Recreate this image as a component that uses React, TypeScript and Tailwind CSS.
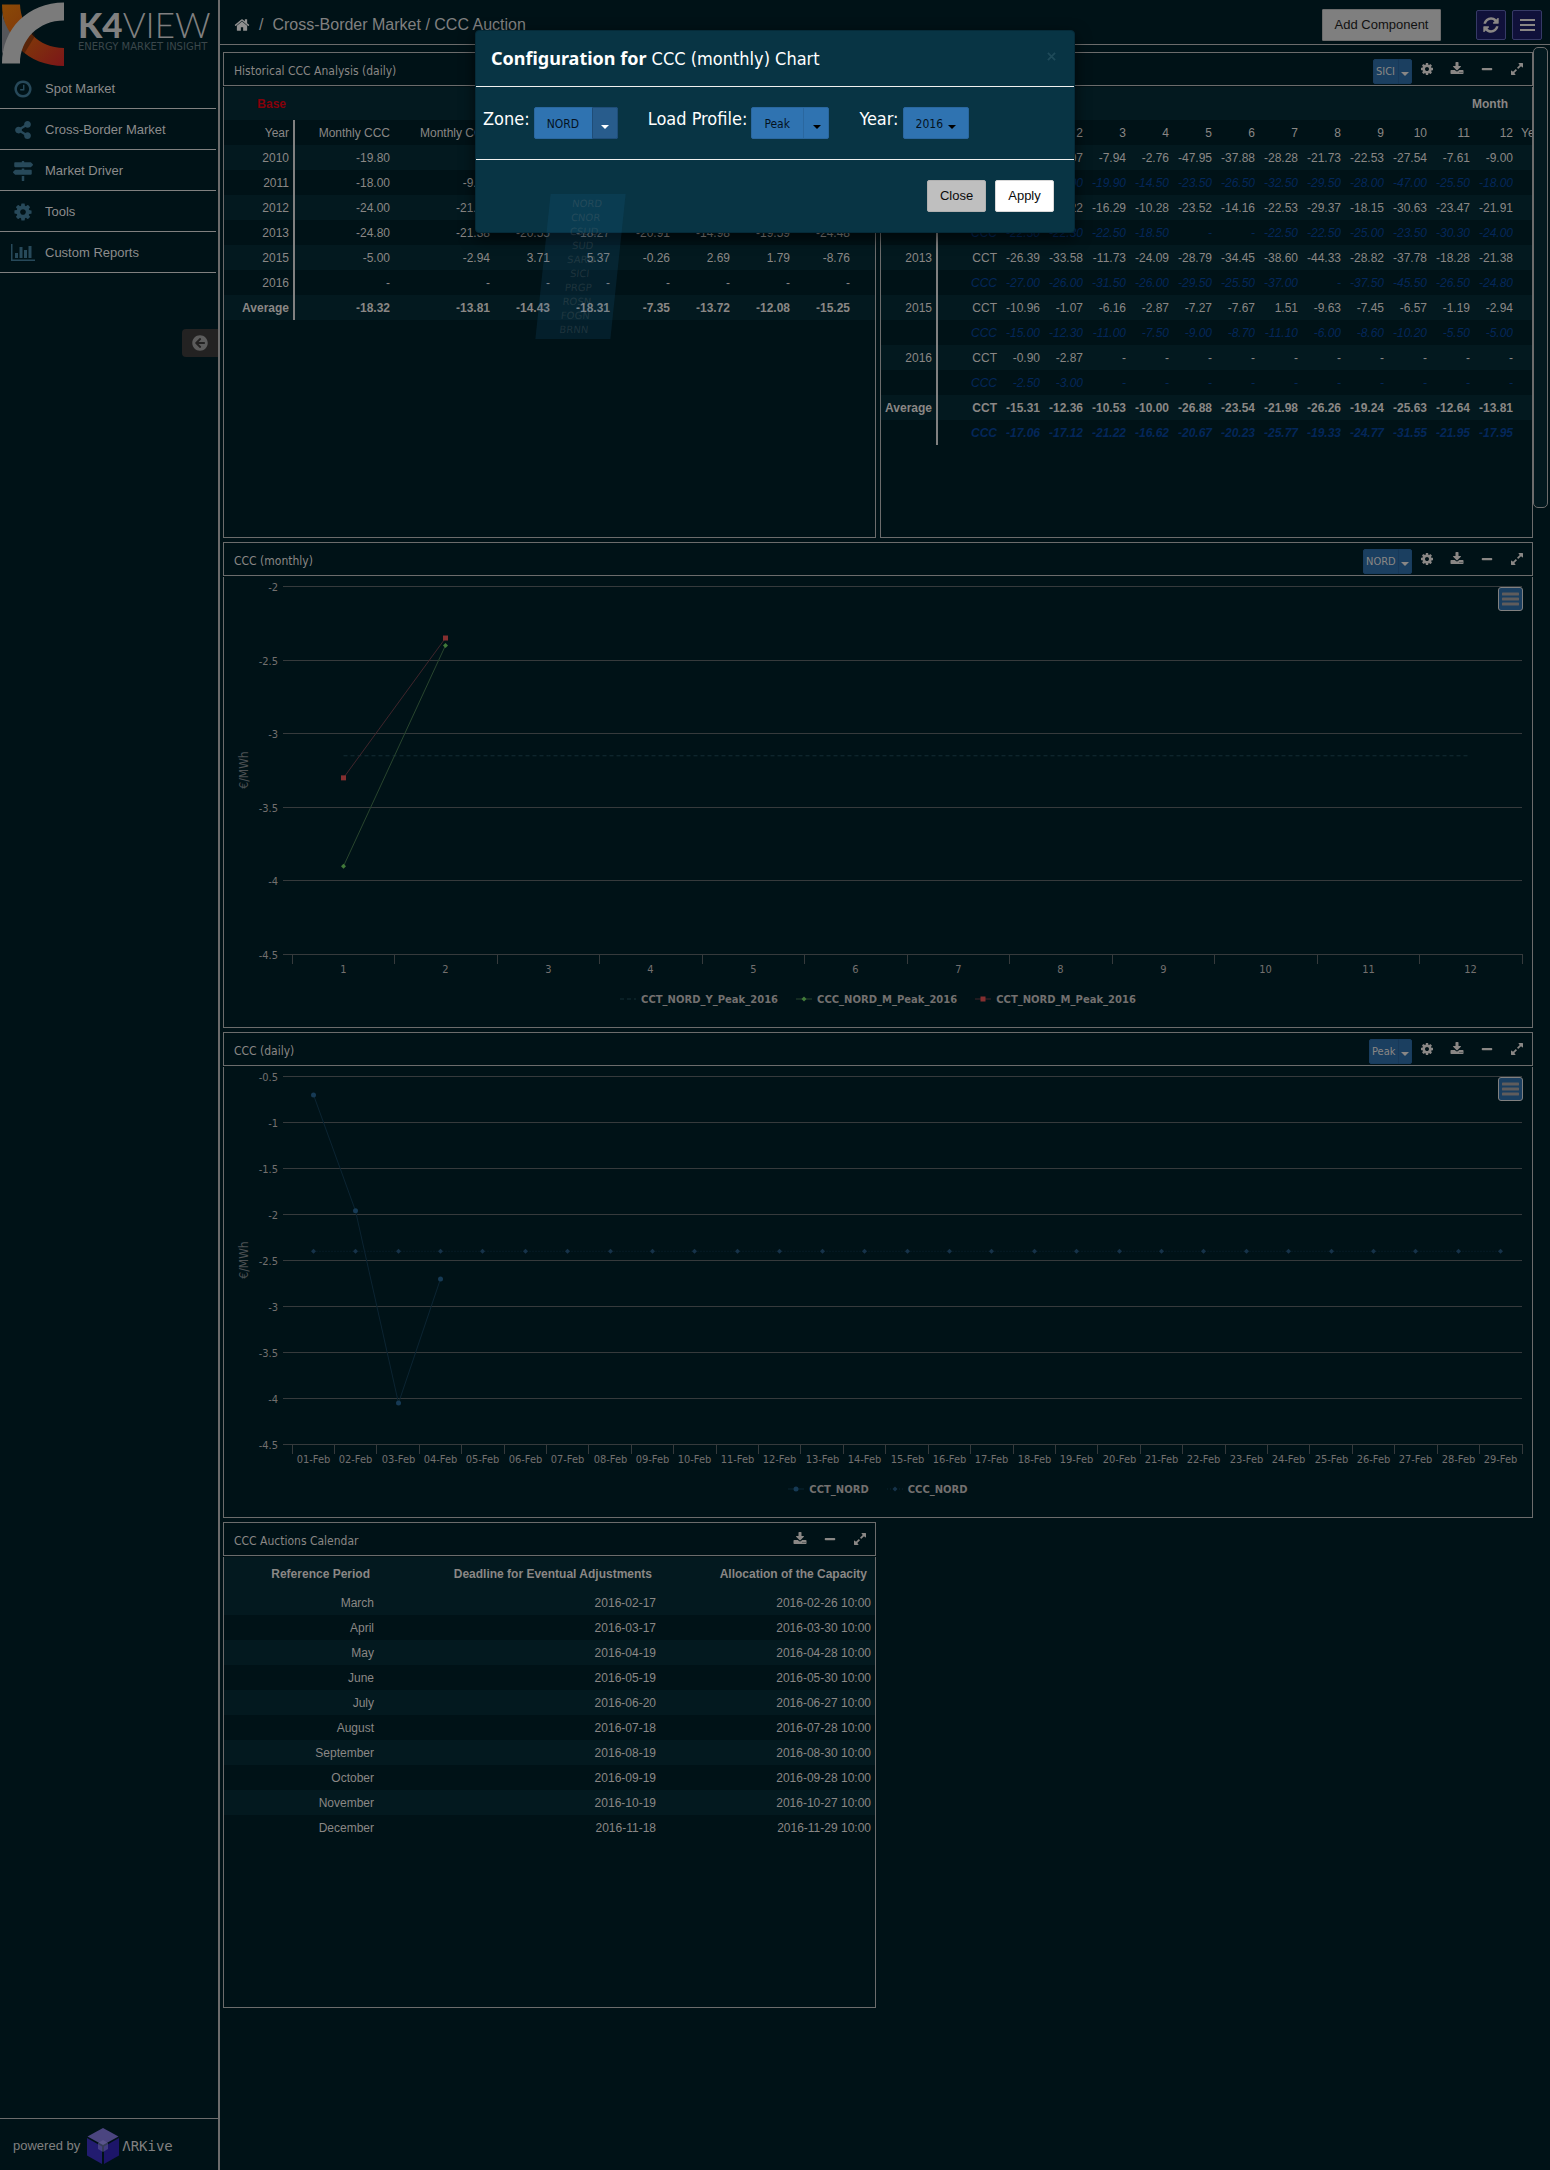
import { useEffect, useRef, useState, type ReactNode } from "react";
import { FaArrowCircleLeft, FaMapSigns, FaMinus, FaShareAlt } from "react-icons/fa";

/* ---------- icons (1792 unit grid) ---------- */

const ICONS = {
  cog: "M1152 896q0-106-75-181t-181-75-181 75-75 181 75 181 181 75 181-75 75-181zm512-109v222q0 12-8 23t-20 13l-185 28q-19 54-39 91 35 50 107 138 10 12 10 25t-9 23q-27 37-99 108t-94 71q-12 0-26-9l-138-108q-44 23-91 38-16 136-29 186-7 28-36 28h-222q-14 0-24.5-8.5t-11.5-21.5l-28-184q-49-16-90-37l-141 107q-10 9-25 9-14 0-25-11-126-114-165-168-7-10-7-23 0-12 8-23 15-21 51-66.5t54-70.5q-27-50-41-99l-183-27q-13-2-21-12.5t-8-23.5v-222q0-12 8-23t19-13l186-28q14-46 39-92-40-57-107-138-10-12-10-24 0-10 9-23 26-36 98.5-107.5t94.5-71.5q13 0 26 10l138 107q44-23 91-38 16-136 29-186 7-28 36-28h222q14 0 24.5 8.5t11.5 21.5l28 184q49 16 90 37l142-107q9-9 24-9 13 0 25 10 129 119 165 170 7 8 7 22 0 12-8 23-15 21-51 66.5t-54 70.5q26 50 41 98l183 28q13 2 21 12.5t8 23.5z",
  download:
    "M1344 1344q0-26-19-45t-45-19-45 19-19 45 19 45 45 19 45-19 19-45zm256 0q0-26-19-45t-45-19-45 19-19 45 19 45 45 19 45-19 19-45zm128-224v320q0 40-28 68t-68 28h-1472q-40 0-68-28t-28-68v-320q0-40 28-68t68-28h465l135 136q58 56 136 56t136-56l136-136h464q40 0 68 28t28 68zm-325-569q17 41-14 70l-448 448q-18 19-45 19t-45-19l-448-448q-31-29-14-70 17-39 59-39h256v-448q0-26 19-45t45-19h256q26 0 45 19t19 45v448h256q42 0 59 39z",
  expand:
    "M883 1056q0 13-10 23l-332 332 144 144q19 19 19 45t-19 45-45 19h-448q-26 0-45-19t-19-45v-448q0-26 19-45t45-19 45 19l144 144 332-332q10-10 23-10t23 10l114 114q10 10 10 23zm781-864v448q0 26-19 45t-45 19-45-19l-144-144-332 332q-10 10-23 10t-23-10l-114-114q-10-10-10-23t10-23l332-332-144-144q-19-19-19-45t19-45 45-19h448q26 0 45 19t19 45z",
  refresh:
    "M1639 1056q0 5-1 7-64 268-268 434.5t-478 166.5q-146 0-282.5-55t-243.5-157l-129 129q-19 19-45 19t-45-19-19-45v-448q0-26 19-45t45-19h448q26 0 45 19t19 45-19 45l-137 137q71 66 161 102t187 36q134 0 250-65t186-179q11-17 53-117 8-23 30-23h192q13 0 22.5 9.5t9.5 22.5zm25-800v448q0 26-19 45t-45 19h-448q-26 0-45-19t-19-45 19-45l138-138q-148-137-349-137-134 0-250 65t-186 179q-11 17-53 117-8 23-30 23h-199q-13 0-22.5-9.5t-9.5-22.5v-7q65-268 270-434.5t480-166.5q146 0 284 55.5t245 156.5l130-129q19-19 45-19t45 19 19 45z",
  home: "M1472 992v480q0 26-19 45t-45 19h-384v-384h-256v384h-384q-26 0-45-19t-19-45v-480q0-1 .5-3t.5-3l575-474 575 474q1 2 1 6zm223-69l-62 74q-8 9-21 11h-3q-13 0-21-7l-692-577-692 577q-12 8-24 7-13-2-21-11l-62-74q-8-10-7-23.5t11-21.5l719-599q32-26 76-26t76 26l244 204v-195q0-14 9-23t23-9h192q14 0 23 9t9 23v408l219 182q10 8 11 21.5t-7 23.5z",
  clock:
    "M1024 544v448q0 14-9 23t-23 9h-320q-14 0-23-9t-9-23v-64q0-14 9-23t23-9h224v-352q0-14 9-23t23-9h64q14 0 23 9t9 23zm416 352q0-148-73-273t-198-198-273-73-273 73-198 198-73 273 73 273 198 198 273 73 273-73 198-198 73-273zm224 0q0 209-103 385.5t-279.5 279.5-385.5 103-385.5-103-279.5-279.5-103-385.5 103-385.5 279.5-279.5 385.5-103 385.5 103 279.5 279.5 103 385.5z",
};

function Icon({ name, className }: { name: keyof typeof ICONS; className: string }) {
  return (
    <svg viewBox="0 0 1792 1792" className={className} fill="currentColor" aria-hidden="true">
      <path d={ICONS[name]} />
    </svg>
  );
}

function Caret({ className }: { className: string }) {
  return (
    <svg viewBox="0 0 8 4" className={"h-1 w-2 " + className} fill="currentColor" aria-hidden="true">
      <path d="M0 0h8L4 4z" />
    </svg>
  );
}

function BarsIcon() {
  return (
    <svg viewBox="0 0 22 16" className="h-4 w-[22px]" aria-hidden="true">
      <g fill="none" stroke="currentColor" strokeWidth="2">
        <path d="M4 3h15M4 8h15M4 13h15" />
      </g>
    </svg>
  );
}

function BarChartIcon() {
  return (
    <svg viewBox="0 0 24 18" className="h-[18px] w-6" fill="currentColor" aria-hidden="true">
      <path d="M0 0h1.500v15.500H24V17H0zM4 9h3v5H4zM8.500 3h3v11h-3zM13 6h3v8h-3zM17.500 2h3v12h-3z" />
    </svg>
  );
}

/* ---------- brand marks ---------- */

function K4Logo() {
  return (
    <div className="flex h-[68px] items-start">
      <svg viewBox="0 0 66 68" className="h-[68px] w-[66px] shrink-0" aria-hidden="true">
        <defs>
          <linearGradient id="swoosh" x1="0" y1="0" x2="1" y2="1">
            <stop offset="0" stopColor="#8a4a06" />
            <stop offset="0.55" stopColor="#7f330c" />
            <stop offset="1" stopColor="#7c1519" />
          </linearGradient>
        </defs>
        <path d="M2 4.500h18C21 28 38 48 64 48v18C28 66 2 40 2 4.500z" fill="url(#swoosh)" />
        <path d="M2 12Q4 24 11 34L2 54z" fill="#55565a" />
        <path d="M17 44 33 30 35 36 24 54z" fill="#2a1206" opacity="0.45" />
        <path d="M2 63.500C2 29 28 2.500 64 2.500v18C39 20.500 20 39 20 63.500z" fill="#7b7b7b" />
      </svg>
      <div className="ml-[12px] flex flex-col pt-[7px]">
        <div className="font-[Lato] text-[35px] leading-[34px] text-[#808080]">
          <span className="font-black">K4</span>
          <span className="font-light">VIEW</span>
        </div>
        <div className="font-['DejaVu_Sans'] text-[10px] leading-3 whitespace-nowrap text-[#3b474b]">
          ENERGY MARKET INSIGHT
        </div>
      </div>
    </div>
  );
}

function ArkiveLogo() {
  return (
    <span className="flex items-center">
      <svg viewBox="0 0 34 38" className="h-[38px] w-[34px]" aria-hidden="true">
        <path d="M17 1 32.500 9.500 17 18 1.500 9.500z" fill="#4b4580" />
        <path d="M1 11 16 19.500V37L1 28.500z" fill="#221c70" />
        <path d="M33 11 18 19.500V37l15-8.500z" fill="#1c1568" />
        <path d="M12 16l5-3 5 3v6l-5 3-5-3z" fill="#6a659a" opacity="0.5" />
      </svg>
      <span className="ml-[2px] font-['DejaVu_Sans_Mono'] text-[14px] leading-5 text-[#808080]">ΛRKive</span>
    </span>
  );
}

/* ---------- sidebar ---------- */

const NAV: { label: string; icon: ReactNode }[] = [
  { label: "Spot Market", icon: <Icon name="clock" className="size-5" /> },
  { label: "Cross-Border Market", icon: <FaShareAlt className="size-[18px]" /> },
  { label: "Market Driver", icon: <FaMapSigns className="size-5" /> },
  { label: "Tools", icon: <Icon name="cog" className="size-5" /> },
  { label: "Custom Reports", icon: <BarChartIcon /> },
];

function Sidebar() {
  return (
    <aside className="flex w-[220px] shrink-0 flex-col border-r-2 border-[#6c6c6c]">
      <K4Logo />
      <nav className="mr-[2px]">
        {NAV.map((n) => (
          <a
            key={n.label}
            href="#"
            className="flex h-[41px] items-center border-b border-[#808080] pt-px text-[13px] text-[#8c8c8c]"
          >
            <span className="flex w-[45px] justify-center text-[#27495a]">{n.icon}</span>
            {n.label}
          </a>
        ))}
      </nav>
      <button
        type="button"
        aria-label="Collapse menu"
        className="mt-14 flex h-7 w-9 items-center justify-center self-end rounded-l-[4px] bg-[#232222] text-[#5c5c5c]"
      >
        <FaArrowCircleLeft className="size-4" />
      </button>
      <div className="mt-auto flex h-[52px] items-center border-t border-[#6c6c6c] pt-[2px] pl-[13px] text-[13px] text-[#808080]">
        <span className="mr-[6px]">powered by</span>
        <ArkiveLogo />
      </div>
    </aside>
  );
}

/* ---------- widgets ---------- */

const TOOL = "flex h-6 w-[30px] items-center justify-center";

function Widget({
  title,
  select,
  settings = true,
  wide,
  children,
}: {
  title: string;
  select?: { value: string; label: string };
  settings?: boolean;
  wide?: boolean;
  children: ReactNode;
}) {
  return (
    <section className={wide ? "col-span-2 min-w-0" : "min-w-0"}>
      <header className="mb-px flex h-[34px] items-center border border-[#6c6c6c] text-[#8a8785]">
        <h2 className="flex-1 pt-1 pl-[10px] font-['DejaVu_Sans_Condensed'] text-[12px]">{title}</h2>
        {select && (
          <div className="relative mb-px self-end">
            <select
              aria-label={select.label}
              className="block h-[25px] appearance-none rounded-[2px] border border-[#183c5e] bg-[#1b3f60] pt-px pr-[15px] pl-[2px] font-['DejaVu_Sans_Condensed'] text-[11px] text-[#8a8785]"
            >
              <option>{select.value}</option>
            </select>
            <span className="pointer-events-none absolute inset-y-0 right-0 w-[14px] border-l border-[#183858]">
              <Caret className="mt-[13px] ml-[2px]" />
            </span>
          </div>
        )}
        {settings && (
          <button type="button" aria-label="Settings" className={TOOL}>
            <Icon name="cog" className="size-[14px]" />
          </button>
        )}
        <button type="button" aria-label="Download" className={TOOL}>
          <Icon name="download" className="size-[14px]" />
        </button>
        <button type="button" aria-label="Minimize" className={TOOL}>
          <FaMinus className="size-3" />
        </button>
        <button type="button" aria-label="Expand" className={TOOL}>
          <Icon name="expand" className="size-[14px]" />
        </button>
      </header>
      <div className="relative h-[451px] overflow-hidden border-x border-b border-[#6c6c6c]">{children}</div>
    </section>
  );
}

const LIGHT = "bg-[#03191f]";
const YEAR_CELL = "border-r-2 border-[#808080] pr-1 text-right";

const HISTORY: string[][] = [
  ["2010", "-19.80", "", "-7.94", "-2.76", "-8.28", "-7.53", "-7.61", "-9.00"],
  ["2011", "-18.00", "-9.40", "-10.28", "-14.16", "-9.37", "-8.15", "-7.47", "-9.91"],
  ["2012", "-24.00", "-21.91", "-22.50", "-18.50", "-22.50", "-25.00", "-23.50", "-24.00"],
  ["2013", "-24.80", "-21.38", "-20.55", "-18.27", "-20.91", "-14.98", "-19.59", "-24.48"],
  ["2015", "-5.00", "-2.94", "3.71", "5.37", "-0.26", "2.69", "1.79", "-8.76"],
  ["2016", "-", "-", "-", "-", "-", "-", "-", "-"],
  ["Average", "-18.32", "-13.81", "-14.43", "-18.31", "-7.35", "-13.72", "-12.08", "-15.25"],
];

function HistoryTable() {
  return (
    <table className="w-full table-fixed text-[12px] text-[#8a8785]">
      <colgroup>
        <col className="w-[70px]" />
        <col className="w-[100px]" />
        <col className="w-[100px]" />
        {[0, 1, 2, 3, 4, 5].map((i) => (
          <col key={i} className="w-[60px]" />
        ))}
        <col />
      </colgroup>
      <thead>
        <tr className={"h-[33px] " + LIGHT}>
          <th className="pr-2 text-right font-bold text-[#86000a]">Base</th>
          <td colSpan={9} />
        </tr>
        <tr className="h-[25px]">
          <th className={"font-normal " + YEAR_CELL}>Year</th>
          <th className="pr-1 text-right font-normal">Monthly CCC</th>
          <th className="pr-1 text-right font-normal">Monthly CCT</th>
          <td colSpan={7} />
        </tr>
      </thead>
      <tbody>
        {HISTORY.map((row, r) => (
          <tr
            key={row[0]}
            className={"h-[25px] " + (r % 2 === 0 ? LIGHT : "") + (row[0] === "Average" ? " font-bold" : "")}
          >
            {row.map((v, i) => (
              <td key={i} className={i === 0 ? YEAR_CELL : "pr-1 text-right"}>
                {v}
              </td>
            ))}
            <td />
          </tr>
        ))}
      </tbody>
    </table>
  );
}

const MONTHLY: [string, string, string][] = [
  ["2011", "CCT", "-9.40 -13.07 -7.94 -2.76 -47.95 -37.88 -28.28 -21.73 -22.53 -27.54 -7.61 -9.00"],
  ["", "CCC", "-18.00 -19.00 -19.90 -14.50 -23.50 -26.50 -32.50 -29.50 -28.00 -47.00 -25.50 -18.00"],
  ["2012", "CCT", "-21.91 -10.22 -16.29 -10.28 -23.52 -14.16 -22.53 -29.37 -18.15 -30.63 -23.47 -21.91"],
  ["", "CCC", "-22.30 -22.30 -22.50 -18.50 - - -22.50 -22.50 -25.00 -23.50 -30.30 -24.00"],
  ["2013", "CCT", "-26.39 -33.58 -11.73 -24.09 -28.79 -34.45 -38.60 -44.33 -28.82 -37.78 -18.28 -21.38"],
  ["", "CCC", "-27.00 -26.00 -31.50 -26.00 -29.50 -25.50 -37.00 - -37.50 -45.50 -26.50 -24.80"],
  ["2015", "CCT", "-10.96 -1.07 -6.16 -2.87 -7.27 -7.67 1.51 -9.63 -7.45 -6.57 -1.19 -2.94"],
  ["", "CCC", "-15.00 -12.30 -11.00 -7.50 -9.00 -8.70 -11.10 -6.00 -8.60 -10.20 -5.50 -5.00"],
  ["2016", "CCT", "-0.90 -2.87 - - - - - - - - - -"],
  ["", "CCC", "-2.50 -3.00 - - - - - - - - - -"],
  ["Average", "CCT", "-15.31 -12.36 -10.53 -10.00 -26.88 -23.54 -21.98 -26.26 -19.24 -25.63 -12.64 -13.81"],
  ["", "CCC", "-17.06 -17.12 -21.22 -16.62 -20.67 -20.23 -25.77 -19.33 -24.77 -31.55 -21.95 -17.95"],
];

function MonthlyTable() {
  return (
    <table className="w-full table-fixed text-[12px] text-[#8a8785]">
      <colgroup>
        <col className="w-[56px]" />
        <col className="w-[63px]" />
        {Array.from({ length: 12 }, (_, i) => (
          <col key={i} className="w-[43px]" />
        ))}
        <col />
      </colgroup>
      <thead>
        <tr className={"h-[33px] " + LIGHT}>
          <th colSpan={14} className="pr-2 text-right font-bold">
            Month
          </th>
          <td />
        </tr>
        <tr className="h-[25px]">
          <th className={"font-normal " + YEAR_CELL} />
          <td />
          {Array.from({ length: 12 }, (_, i) => (
            <th key={i} className="pr-[3px] text-right font-normal">
              {i + 1}
            </th>
          ))}
          <th className="pl-[5px] text-left font-normal whitespace-nowrap">Year</th>
        </tr>
      </thead>
      <tbody>
        {MONTHLY.map(([year, kind, values], r) => (
          <tr
            key={r}
            className={
              "h-[25px] " +
              (r % 2 === 0 ? LIGHT : "text-[#04275a] italic") +
              (r >= MONTHLY.length - 2 ? " font-bold" : "")
            }
          >
            <td className={YEAR_CELL}>{year}</td>
            <td className="pr-[3px] text-right">{kind}</td>
            {values.split(" ").map((v, i) => (
              <td key={i} className="pr-[3px] text-right">
                {v}
              </td>
            ))}
            <td />
          </tr>
        ))}
      </tbody>
    </table>
  );
}

const CALENDAR = [
  ["March", "2016-02-17", "2016-02-26 10:00"],
  ["April", "2016-03-17", "2016-03-30 10:00"],
  ["May", "2016-04-19", "2016-04-28 10:00"],
  ["June", "2016-05-19", "2016-05-30 10:00"],
  ["July", "2016-06-20", "2016-06-27 10:00"],
  ["August", "2016-07-18", "2016-07-28 10:00"],
  ["September", "2016-08-19", "2016-08-30 10:00"],
  ["October", "2016-09-19", "2016-09-28 10:00"],
  ["November", "2016-10-19", "2016-10-27 10:00"],
  ["December", "2016-11-18", "2016-11-29 10:00"],
];

function CalendarTable() {
  return (
    <table className="w-full table-fixed text-[12px] text-[#8a8785]">
      <colgroup>
        <col className="w-[154px]" />
        <col className="w-[282px]" />
        <col />
      </colgroup>
      <thead>
        <tr className={"h-[33px] " + LIGHT}>
          {["Reference Period", "Deadline for Eventual Adjustments", "Allocation of the Capacity"].map((h) => (
            <th key={h} className="pr-2 text-right font-bold">
              {h}
            </th>
          ))}
        </tr>
      </thead>
      <tbody>
        {CALENDAR.map((row, r) => (
          <tr key={row[0]} className={"h-[25px] " + (r % 2 === 0 ? LIGHT : "")}>
            {row.map((v) => (
              <td key={v} className="pr-1 text-right">
                {v}
              </td>
            ))}
          </tr>
        ))}
      </tbody>
    </table>
  );
}

/* ---------- charts ---------- */

type Marker = "none" | "diamond" | "square" | "circle";

interface Series {
  name: string;
  color: string;
  line: string;
  dash?: string;
  marker: Marker;
  points: number[];
}

function Mark({ type, x, y, color }: { type: Marker; x: number; y: number; color: string }) {
  if (type === "square") return <rect x={x - 2.5} y={y - 2.5} width={5} height={5} fill={color} />;
  if (type === "circle") return <circle cx={x} cy={y} r={2.5} fill={color} />;
  if (type === "diamond")
    return <path d={`M${x} ${y - 2.5}L${x + 2.5} ${y}L${x} ${y + 2.5}L${x - 2.5} ${y}z`} fill={color} />;
  return null;
}

function Chart({
  categories,
  ticks,
  series,
}: {
  categories: string[];
  ticks: number[];
  series: Series[];
}) {
  const box = useRef<HTMLDivElement>(null);
  const [width, setWidth] = useState(1308);
  useEffect(() => {
    const el = box.current;
    if (!el) return;
    const update = () => setWidth(el.clientWidth);
    update();
    const watcher = new ResizeObserver(update);
    watcher.observe(el);
    return () => watcher.disconnect();
  }, []);

  const left = 68;
  const right = width - 10;
  const top = 9;
  const bottom = 377;
  const max = ticks[0];
  const min = ticks[ticks.length - 1];
  const step = (right - left) / categories.length;
  const px = (i: number) => Math.floor(left + step * (i + 0.5)) + 0.5;
  const py = (v: number) => top + ((max - v) / (max - min)) * (bottom - top) + 0.5;

  return (
    <div ref={box}>
      <svg width={width} height={410} className="block font-['DejaVu_Sans_Condensed'] text-[11px]">
        {ticks.map((t) => {
          const y = Math.round(py(t) - 0.5) + 0.5;
          return (
            <g key={t}>
              <path d={`M59 ${y}H${right}`} stroke="#363a3c" />
              <text x={54} y={y + 4.5} textAnchor="end" fill="#73706f">
                {t}
              </text>
            </g>
          );
        })}
        {Array.from({ length: categories.length + 1 }, (_, i) => {
          const x = Math.floor(left + step * i) + 0.5;
          return <path key={i} d={`M${x} ${bottom}v10`} stroke="#363a3c" />;
        })}
        {categories.map((c, i) => (
          <text key={c} x={px(i)} y={396} textAnchor="middle" fill="#73706f">
            {c}
          </text>
        ))}
        <text
          x={24}
          y={193}
          transform="rotate(-90 24 193)"
          textAnchor="middle"
          fill="#4c5154"
          className="text-[12px]"
        >
          €/MWh
        </text>
        {series.map((s) => (
          <g key={s.name}>
            <polyline
              points={s.points.map((v, i) => `${px(i)},${py(v)}`).join(" ")}
              fill="none"
              stroke={s.line}
              strokeDasharray={s.dash}
            />
            {s.points.map((v, i) => (
              <Mark key={i} type={s.marker} x={px(i)} y={py(v)} color={s.color} />
            ))}
          </g>
        ))}
      </svg>
      <ul className="flex h-6 justify-center gap-[18px]">
        {series.map((s) => (
          <li
            key={s.name}
            className="flex items-center gap-[5px] font-['DejaVu_Sans'] text-[10px] font-bold text-[#73706f]"
          >
            <svg width={16} height={8} aria-hidden="true">
              <path d="M0 4H16" stroke={s.line} strokeDasharray={s.dash} />
              <Mark type={s.marker} x={8} y={4} color={s.color} />
            </svg>
            {s.name}
          </li>
        ))}
      </ul>
      <button
        type="button"
        aria-label="Chart menu"
        className="absolute top-[10px] right-[9px] flex h-6 w-[25px] items-center justify-center rounded-[3px] border border-[#808080] bg-[#1b3f60] text-[#5f5c5c]"
      >
        <svg viewBox="0 0 17 14" className="h-[14px] w-[17px]" aria-hidden="true">
          <path d="M1 2h15M1 7h15M1 12h15" stroke="currentColor" strokeWidth="3" strokeLinecap="round" />
        </svg>
      </button>
    </div>
  );
}

const MONTHS = Array.from({ length: 12 }, (_, i) => String(i + 1));
const DAYS = Array.from({ length: 29 }, (_, i) => String(i + 1).padStart(2, "0") + "-Feb");

const MONTHLY_SERIES: Series[] = [
  {
    name: "CCT_NORD_Y_Peak_2016",
    color: "#142e36",
    line: "#142e36",
    dash: "4 3",
    marker: "none",
    points: MONTHS.map(() => -3.15),
  },
  { name: "CCC_NORD_M_Peak_2016", color: "#417a3a", line: "#28452e", marker: "diamond", points: [-3.9, -2.4] },
  { name: "CCT_NORD_M_Peak_2016", color: "#852f30", line: "#40252b", marker: "square", points: [-3.3, -2.35] },
];

const DAILY_SERIES: Series[] = [
  {
    name: "CCT_NORD",
    color: "#163a55",
    line: "#0b2432",
    marker: "circle",
    points: [-0.7, -1.96, -4.05, -2.7],
  },
  {
    name: "CCC_NORD",
    color: "#16334a",
    line: "#0b2432",
    dash: "1 2",
    marker: "diamond",
    points: DAYS.map(() => -2.4),
  },
];

/* ---------- configuration dialog ---------- */

const ZONES = ["NORD", "CNOR", "CSUD", "SUD", "SARD", "SICI", "PRGP", "ROSN", "FOGN", "BRNN"];

function Field({
  id,
  label,
  value,
  width,
  caret,
  children,
}: {
  id: string;
  label: string;
  value: string;
  width: string;
  caret: string;
  children?: ReactNode;
}) {
  return (
    <div className="flex items-start">
      <label htmlFor={id} className="mr-1 text-[18px] leading-[24px] text-white">
        {label}
      </label>
      <div className="relative">
        <select
          id={id}
          className={
            "block h-8 appearance-none rounded-[2px] border border-[#2a679f] bg-[#2f73b1] pt-px pl-3 text-[12px] text-[#04121f] " +
            width
          }
        >
          <option>{value}</option>
        </select>
        <span
          className={
            "pointer-events-none absolute inset-y-0 right-0 flex items-center justify-center rounded-r-[2px] pt-2 " +
            caret
          }
        >
          <Caret className="" />
        </span>
        {children}
      </div>
    </div>
  );
}

function ConfigDialog() {
  return (
    <div className="pointer-events-none absolute inset-x-0 top-[30px] flex justify-center">
      <div
        role="dialog"
        aria-labelledby="config-title"
        className="pointer-events-auto w-[600px] rounded-[4px] border border-[#052a38] bg-[#083444] font-['DejaVu_Sans_Condensed'] shadow-[0_5px_15px_rgba(0,0,0,0.6)]"
      >
        <div className="flex h-[56px] items-center border-b border-[#f0f0f0] pr-[18px] pl-[15px]">
          <h1 id="config-title" className="flex-1 text-[18px] text-white">
            <strong className="font-['Noto_Sans'] font-bold">Configuration for</strong> CCC (monthly) Chart
          </h1>
          <button type="button" aria-label="Close dialog" className="pb-1 text-[#1e4a59]">
            <svg viewBox="0 0 10 10" className="size-[9px]" aria-hidden="true">
              <path d="M1 1l8 8M9 1L1 9" stroke="currentColor" strokeWidth="2" />
            </svg>
          </button>
        </div>
        <div className="flex h-[73px] items-start border-b border-[#f0f0f0] pt-5 pl-[7px]">
          <div className="flex gap-[30px]">
            <Field
              id="zone"
              label="Zone:"
              value="NORD"
              width="w-[84px]"
              caret="w-[26px] border border-[#1f4d78] bg-[#285c8c] text-white"
            >
              <ul className="pointer-events-none absolute top-[87px] left-[9px] w-[75px] -skew-x-6 bg-[#1a6aa0]/15 pt-[3px] pb-[2px] text-center font-['DejaVu_Sans'] text-[10px] leading-[14px] text-[#8a8785]/20">
                {ZONES.map((z) => (
                  <li key={z}>{z}</li>
                ))}
              </ul>
            </Field>
            <Field
              id="profile"
              label="Load Profile:"
              value="Peak"
              width="w-[78px]"
              caret="w-[26px] border-l border-[#2a679f] text-black"
            />
            <Field id="year" label="Year:" value="2016" width="w-[66px]" caret="w-[34px] text-black" />
          </div>
        </div>
        <div className="flex h-[72px] items-center justify-end gap-[9px] pr-5 font-['Liberation_Sans'] text-[13px] text-[#0b0b0b]">
          <button type="button" className="h-8 w-[59px] rounded-[2px] border border-[#b0b0b0] bg-[#bfbfbf]">
            Close
          </button>
          <button type="button" className="h-8 w-[59px] rounded-[2px] border border-[#d8d8d8] bg-white">
            Apply
          </button>
        </div>
      </div>
    </div>
  );
}

/* ---------- page ---------- */

export default function App() {
  const square =
    "flex size-[30px] items-center justify-center rounded-[2px] border border-[#363a66] bg-[#10113a] text-[#8a8785]";
  return (
    <div className="relative flex min-h-screen bg-[#001217] font-['Liberation_Sans',sans-serif]">
      <Sidebar />
      <div className="flex min-w-0 flex-1 flex-col">
        <header className="flex h-[45px] items-center border-b border-[#6c6c6c] pt-[6px] pr-2 pl-[14px] text-[16px] text-[#808080]">
          <a href="#" aria-label="Home">
            <Icon name="home" className="size-4 text-[#909090]" />
          </a>
          <span className="mx-[9px]">/</span>
          <span className="flex-1">Cross-Border Market / CCC Auction</span>
          <button
            type="button"
            className="mr-[35px] h-8 w-[119px] rounded-[1px] border border-[#6c6c6c] bg-[#7f7f7f] text-[13px] text-[#111]"
          >
            Add Component
          </button>
          <button type="button" aria-label="Refresh" className={"mr-[6px] " + square}>
            <Icon name="refresh" className="size-[18px]" />
          </button>
          <button type="button" aria-label="Menu" className={square}>
            <BarsIcon />
          </button>
        </header>
        <div className="flex flex-1">
          <main className="grid min-w-0 flex-1 grid-cols-2 content-start gap-1 pt-[7px] pl-[3px]">
            <Widget title="Historical CCC Analysis (daily)" select={{ value: "SICI", label: "Zone" }}>
              <HistoryTable />
            </Widget>
            <Widget title="CCC/CCT History" select={{ value: "SICI", label: "Zone" }}>
              <MonthlyTable />
            </Widget>
            <Widget wide title="CCC (monthly)" select={{ value: "NORD", label: "Zone" }}>
              <Chart categories={MONTHS} ticks={[-2, -2.5, -3, -3.5, -4, -4.5]} series={MONTHLY_SERIES} />
            </Widget>
            <Widget wide title="CCC (daily)" select={{ value: "Peak", label: "Load profile" }}>
              <Chart
                categories={DAYS}
                ticks={[-0.5, -1, -1.5, -2, -2.5, -3, -3.5, -4, -4.5]}
                series={DAILY_SERIES}
              />
            </Widget>
            <Widget title="CCC Auctions Calendar" settings={false}>
              <CalendarTable />
            </Widget>
          </main>
          <div className="mt-[2px] mr-[2px] h-[461px] w-[15px] rounded-[5px] border border-[#6c6c6c] bg-[#03191f]" />
        </div>
      </div>
      <ConfigDialog />
    </div>
  );
}
